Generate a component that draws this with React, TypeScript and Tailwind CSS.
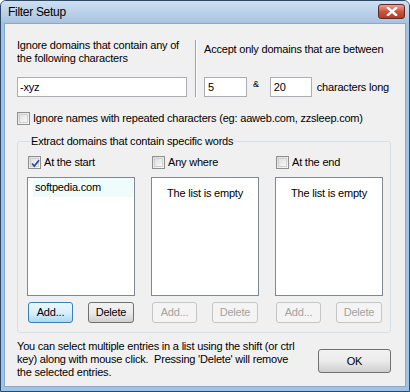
import { ReactNode } from "react";

const font = { fontFamily: '"Liberation Sans", Arial, sans-serif' };

function CheckBox({ checked, label }: { checked?: boolean; label: string }) {
  return (
    <label className="flex items-center gap-[3px] leading-[13px]">
      <span className="relative flex h-[13px] w-[13px] items-center justify-center border border-[#8e8f8f] bg-gradient-to-br from-[#dcdcdc] to-[#fbfbfb]">
        <span className="h-[9px] w-[9px] border border-[#d0d0d0] bg-gradient-to-br from-[#e0e0e0] to-[#f8f8f8]" />
        {checked && (
          <svg
            viewBox="0 0 11 11"
            className="absolute left-[1px] top-[1px] h-[11px] w-[11px]"
          >
            <path
              d="M2 5.5 L4.3 8 L9 2.2"
              fill="none"
              stroke="#2a4f97"
              strokeWidth="1.8"
            />
          </svg>
        )}
      </span>
      <span>{label}</span>
    </label>
  );
}

function Button({
  children,
  disabled,
  focused,
  className = "",
}: {
  children: ReactNode;
  disabled?: boolean;
  focused?: boolean;
  className?: string;
}) {
  const border = disabled
    ? "border-[#c5c5c5] text-[#a3a3a3] bg-[#f4f4f4]"
    : focused
      ? "border-[#3c7fb1] bg-gradient-to-b from-[#eaf6fd] via-[#d9f0fc] to-[#a7d9f5] text-black"
      : "border-[#707070] bg-gradient-to-b from-[#f2f2f2] via-[#ebebeb] to-[#cfcfcf] text-black";
  return (
    <div
      className={`flex items-center justify-center rounded-[3px] border ${border} ${className}`}
    >
      {children}
    </div>
  );
}

function ListBox({ children }: { children: ReactNode }) {
  return (
    <div className="h-[119px] w-[108px] border border-[#828790] bg-white">
      {children}
    </div>
  );
}

function Column({
  label,
  checked,
  active,
  children,
}: {
  label: string;
  checked?: boolean;
  active?: boolean;
  children: ReactNode;
}) {
  return (
    <div className="flex w-[108px] flex-col">
      <div className="pl-[1px]">
        <CheckBox checked={checked} label={label} />
      </div>
      <div className="mt-[8px]">
        <ListBox>{children}</ListBox>
      </div>
      <div className="mt-[6px] flex justify-between pl-[1px] pr-[1px]">
        <Button disabled={!active} focused={active} className="h-[21px] w-[45px]">
          Add...
        </Button>
        <Button disabled={!active} className="h-[21px] w-[46px]">
          Delete
        </Button>
      </div>
    </div>
  );
}

function EmptyList() {
  return (
    <div className="pt-[9px] text-center leading-[13px]">The list is empty</div>
  );
}

export default function App() {
  return (
    <div
      className="flex h-[392px] w-[410px] flex-col rounded-t-[6px] border border-[#2c4a66] bg-[#9fc3e6] text-[11px] tracking-[-0.2px] text-black"
      style={font}
    >
      {/* title bar */}
      <div className="flex h-[22px] shrink-0 items-center justify-between rounded-t-[5px] bg-gradient-to-b from-[#cfe0f1] to-[#a8c3e0] pl-[7px] pr-[4px]">
        <span className="text-[12px] tracking-[-0.3px]">Filter Setup</span>
        <div className="mt-[-2px] flex h-[15px] w-[27px] items-center justify-center rounded-[3px] border border-[#5e2a24] bg-gradient-to-b from-[#e6a294] via-[#c8553f] to-[#b53a23]">
          <svg viewBox="0 0 12 9" className="h-[9px] w-[12px]">
            <path
              d="M2 1 L10 8 M10 1 L2 8"
              stroke="#fff"
              strokeWidth="2.4"
              strokeLinecap="square"
            />
          </svg>
        </div>
      </div>

      {/* client area */}
      <div className="mx-[3px] mb-[4px] flex-1 border border-[#8ba9c7] bg-[#f0f0f0] px-[12px] pt-[15px]">
        <div className="flex">
          <div className="w-[170px] leading-[13px]">
            <div>Ignore domains that contain any of</div>
            <div>the following characters</div>
            <div className="mt-[12px] flex h-[20px] items-center border border-[#abadb3] bg-white pl-[2px]">
              -xyz
            </div>
          </div>
          <div className="ml-[8px] mr-[7px] mt-[1px] h-[57px] w-[2px] border-l border-r border-l-[#a0a0a0] border-r-white" />
          <div className="leading-[13px]">
            <div className="mt-[4px]">Accept only domains that are between</div>
            <div className="mt-[21px] flex items-center">
              <div className="flex h-[20px] w-[43px] items-center border border-[#abadb3] bg-white pl-[3px]">
                5
              </div>
              <span className="ml-[6px] mt-[-6px] text-[9px]">&amp;</span>
              <div className="ml-[11px] flex h-[20px] w-[42px] items-center border border-[#abadb3] bg-white pl-[3px]">
                20
              </div>
              <span className="ml-[5px]">characters long</span>
            </div>
          </div>
        </div>

        <div className="mt-[15px]">
          <CheckBox label="Ignore names with repeated characters (eg: aaweb.com, zzsleep.com)" />
        </div>

        {/* group box */}
        <fieldset className="mt-[10px] w-[374px] rounded-[3px] border border-[#d5dfe5] pb-[9px] pl-[9px] pr-[7px] pt-[8px]">
          <legend className="ml-[3px] px-[1px] leading-[13px]">
            Extract domains that contain specific words
          </legend>
          <div className="flex justify-between">
            <Column label="At the start" checked active>
              <div className="ml-[5px] mr-[1px] flex h-[19px] items-center bg-[#effcfc] pl-[2px]">
                softpedia.com
              </div>
            </Column>
            <Column label="Any where">
              <EmptyList />
            </Column>
            <Column label="At the end">
              <EmptyList />
            </Column>
          </div>
        </fieldset>

        {/* footer */}
        <div className="mt-[7px] flex items-start justify-between">
          <div className="w-[282px] leading-[13px]">
            You can select multiple entries in a list using the shift (or ctrl
            key) along with mouse click.&nbsp; Pressing 'Delete' will remove
            the selected entries.
          </div>
          <Button className="mr-[2px] mt-[9px] h-[24px] w-[73px]">OK</Button>
        </div>
      </div>
    </div>
  );
}
